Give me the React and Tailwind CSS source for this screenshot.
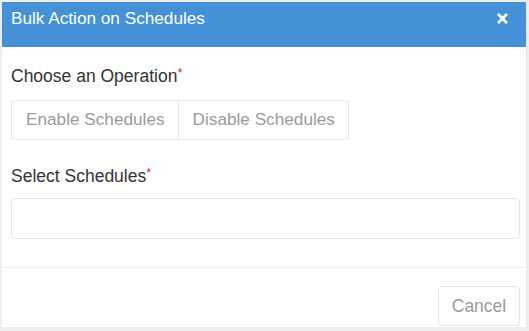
import { FaTimes } from 'react-icons/fa';

export default function App() {
  return (
    <div className="w-[529px] h-[331px] bg-[#efefef] pt-[2px] px-[2px] font-['Liberation_Sans',Arial,sans-serif]">
      <div className="w-[525px] h-[325px] bg-white flex flex-col border-r border-[#e6e6e6]">
        <div className="h-[45px] bg-[#4591d7] flex items-start justify-between pl-[9px] pr-[16px] pt-[6px] shrink-0">
          <span className="text-white text-[17.2px] leading-[20px]">Bulk Action on Schedules</span>
          <FaTimes className="text-white mt-[3px]" size={15} />
        </div>

        <div className="px-[9px] pt-[19px] flex flex-col">
          <label className="text-[17.5px] leading-[20px] text-[#333]">
            Choose an Operation<span className="text-[#e0323c] text-[13px] align-top leading-[14px]">*</span>
          </label>
          <div className="mt-[14px] flex w-fit border border-[#e4e8ea] rounded-[4px] h-[40px]">
            <button className="pl-[14px] pr-[13px] text-[17.2px] text-[#9b9b9b] border-r border-[#e4e8ea]">Enable Schedules</button>
            <button className="pl-[14px] pr-[13px] text-[17.2px] text-[#9b9b9b]">Disable Schedules</button>
          </div>

          <label className="mt-[26px] text-[17.5px] leading-[20px] text-[#333]">
            Select Schedules<span className="text-[#e0323c] text-[13px] align-top leading-[14px]">*</span>
          </label>
          <div className="mt-[12px] h-[41px] w-[509px] border border-[#e6e6e6] rounded-[4px]" />
        </div>

        <div className="mt-[28px] border-t border-[#ececec] flex justify-end pr-[6px] pt-[18px]">
          <button className="w-[82px] h-[40px] border border-[#e6e6e6] rounded-[4px] text-[17.5px] text-[#9b9b9b]">Cancel</button>
        </div>
      </div>
    </div>
  );
}
